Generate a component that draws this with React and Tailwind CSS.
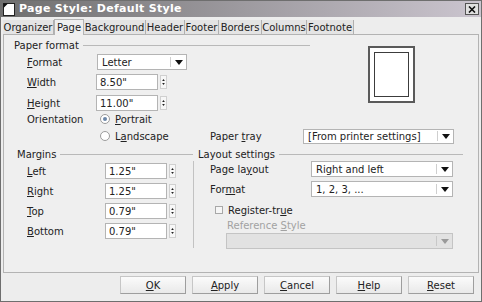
import React from "react";

const tabs = [
  { label: "Organizer", w: "w-[51px]" },
  { label: "Page", w: "w-[30px]", active: true },
  { label: "Background", w: "w-[62px]" },
  { label: "Header", w: "w-[39px]" },
  { label: "Footer", w: "w-[34px]" },
  { label: "Borders", w: "w-[43px]" },
  { label: "Columns", w: "w-[45px]" },
  { label: "Footnote", w: "w-[47px]" },
];

// label with one underlined mnemonic letter
function Mn({ text, at }) {
  return (
    <span className="whitespace-nowrap">
      {text.slice(0, at)}
      <u className="underline-offset-[1px]">{text[at]}</u>
      {text.slice(at + 1)}
    </span>
  );
}

function Arrow({ gray }) {
  return (
    <svg width="8" height="5" viewBox="0 0 8 5">
      <path d="M0 0 H8 L4 5 Z" fill={gray ? "#9a9a9a" : "#111"} />
    </svg>
  );
}

function Select({ value, w, h = "h-[16px]", disabled }) {
  return (
    <div
      className={`${w} ${h} flex border ${
        disabled ? "border-[#c4c4c4] bg-[#e2e2e2]" : "border-[#b4b4b4] bg-white"
      }`}
    >
      <div className="flex-1 flex items-center pl-[4px] whitespace-nowrap">{value}</div>
      <div className="w-[16px] flex items-center justify-center">
        <div className={`h-[10px] border-l ${disabled ? "border-[#c8c8c8]" : "border-[#cfcfcf]"}`} />
        <div className="flex-1 flex justify-center">
          <Arrow gray={disabled} />
        </div>
      </div>
    </div>
  );
}

function Spin({ value, w = "w-[62px]" }) {
  return (
    <div className="flex items-center">
      <div className={`${w} h-[16px] border border-[#b4b4b4] bg-white flex items-center pl-[3px]`}>
        {value}
      </div>
      <div className="ml-[2px] w-[7px] h-[14px] border border-[#d0d0d0] flex flex-col items-center justify-center gap-[2px] bg-[#f7f7f7]">
        <svg width="3" height="2" viewBox="0 0 4 3">
          <path d="M0 3 L2 0 L4 3 Z" fill="#222" />
        </svg>
        <svg width="3" height="2" viewBox="0 0 4 3">
          <path d="M0 0 H4 L2 3 Z" fill="#222" />
        </svg>
      </div>
    </div>
  );
}

function Radio({ checked }) {
  return (
    <div className="w-[10px] h-[10px] rounded-full border border-[#9c9c9c] bg-white flex items-center justify-center">
      {checked && <div className="w-[4px] h-[4px] rounded-full bg-[#6b86a8]" />}
    </div>
  );
}

function Header({ title, pl, lineEnd }) {
  return (
    <div className={`h-[14px] flex items-center ${pl}`}>
      <span className="whitespace-nowrap">{title}</span>
      <div className={`flex-1 ml-[4px] border-t border-[#b9b9b9] ${lineEnd}`} />
    </div>
  );
}

function Button({ children }) {
  return (
    <div className="w-[66px] h-[18px] flex items-center justify-center border border-[#c6c6c6] border-r-[#9e9e9e] border-b-[#9e9e9e] bg-gradient-to-b from-[#fbfbfb] to-[#e9e9e9]">
      {children}
    </div>
  );
}

export default function App() {
  return (
    <div className="w-[482px] h-[302px] overflow-hidden bg-[#ededed] border border-[#6e6e6e] flex flex-col font-['DejaVu_Sans',sans-serif] text-[10px] text-[#222]">
      {/* title bar */}
      <div className="h-[16px] flex items-center bg-gradient-to-r from-[#6f6f6f] via-[#9d9a9f] to-[#cbc5cf]">
        <svg width="12" height="13" viewBox="0 0 12 13" className="ml-[2px]">
          <rect x="0.5" y="0.5" width="11" height="12" fill="#fff" stroke="#222" />
          <path d="M0.5 0.5 H5 L0.5 5 Z" fill="#111" />
        </svg>
        <span className="ml-[4px] text-white font-bold text-[11px] tracking-[0.3px] whitespace-nowrap">
          Page Style: Default Style
        </span>
        <div className="ml-auto mr-[2px] w-[14px] h-[12px] border border-[#555] bg-[#e0e0e0] flex items-center justify-center">
          <svg width="8" height="7" viewBox="0 0 8 7">
            <path d="M1 0.5 L7 6.5 M7 0.5 L1 6.5" stroke="#111" strokeWidth="1.6" />
          </svg>
        </div>
      </div>

      {/* tabs */}
      <div className="h-[16px] flex items-end pl-[2px] mt-[1px]">
        {tabs.map((t) =>
          t.active ? (
            <div
              key={t.label}
              className={`${t.w} h-[16px] -mb-[1px] bg-[#efefef] border border-[#b3b3b3] border-b-0 flex items-center justify-center relative z-10`}
            >
              {t.label}
            </div>
          ) : (
            <div
              key={t.label}
              className={`${t.w} h-[14px] bg-[#e4e4e4] border-r border-[#b0b0b0] flex items-center justify-center whitespace-nowrap`}
            >
              {t.label}
            </div>
          )
        )}
      </div>

      {/* page panel */}
      <div className="mx-[2px] h-[239px] border border-[#b3b3b3] bg-[#efefef] flex flex-col">
        {/* paper format */}
        <div className="flex">
          <div className="w-[306px] flex flex-col">
            <div className="mt-[3px]">
              <Header title="Paper format" pl="pl-[10px]" lineEnd="" />
            </div>
            <div className="mt-[2px] h-[16px] flex items-center">
              <div className="w-[93px] pl-[23px]">
                <Mn text="Format" at={0} />
              </div>
              <Select value="Letter" w="w-[90px]" />
            </div>
            <div className="mt-[4px] h-[16px] flex items-center">
              <div className="w-[92px] pl-[23px]">
                <Mn text="Width" at={0} />
              </div>
              <Spin value={'8.50"'} />
            </div>
            <div className="mt-[5px] h-[16px] flex items-center">
              <div className="w-[92px] pl-[23px]">
                <Mn text="Height" at={0} />
              </div>
              <Spin value={'11.00"'} />
            </div>
            <div className="h-[16px] flex items-center">
              <div className="w-[96px] pl-[23px]">Orientation</div>
              <Radio checked />
              <span className="ml-[5px]">
                <Mn text="Portrait" at={0} />
              </span>
            </div>
          </div>
          <div className="ml-[58px] pt-[11px]">
            <div className="w-[47px] h-[57px] border-2 border-[#5a5a5a] bg-white p-[4px]">
              <div className="w-full h-full border border-[#3c3c3c] bg-white" />
            </div>
          </div>
        </div>
        <div className="mt-[1px] h-[16px] flex items-center">
          <div className="w-[206px] pl-[96px] flex items-center">
            <Radio />
            <span className="ml-[5px]">
              <Mn text="Landscape" at={1} />
            </span>
          </div>
          <div className="w-[93px]">
            <Mn text="Paper tray" at={6} />
          </div>
          <Select value="[From printer settings]" w="w-[151px]" h="h-[15px]" />
        </div>

        {/* margins + layout settings */}
        <div className="mt-[3px] flex">
          <div className="w-[189px] flex flex-col">
            <Header title="Margins" pl="pl-[13px]" lineEnd="" />
            {[
              ["Left", 0, '1.25"', "mt-[2px]"],
              ["Right", 0, '1.25"', "mt-[4px]"],
              ["Top", 0, '0.79"', "mt-[4px]"],
              ["Bottom", 0, '0.79"', "mt-[4px]"],
            ].map(([l, at, v, mt]) => (
              <div key={l} className={`${mt} h-[16px] flex items-center`}>
                <div className="w-[101px] pl-[23px]">
                  <Mn text={l} at={at} />
                </div>
                <Spin value={v} />
              </div>
            ))}
          </div>
          <div className="w-[270px] flex flex-col">
            <Header title="Layout settings" pl="pl-[5px]" lineEnd="" />
            <div className="border-l border-[#c2c2c2] h-[87px] flex flex-col">
              <div className="h-[16px] flex items-center">
                <div className="w-[117px] pl-[16px]">
                  <Mn text="Page layout" at={7} />
                </div>
                <Select value="Right and left" w="w-[142px]" />
              </div>
              <div className="mt-[4px] h-[16px] flex items-center">
                <div className="w-[117px] pl-[16px]">
                  <Mn text="Format" at={3} />
                </div>
                <Select value="1, 2, 3, ..." w="w-[142px]" />
              </div>
              <div className="mt-[6px] h-[14px] flex items-center pl-[21px]">
                <div className="w-[8px] h-[8px] border border-[#a8a8a8] bg-[#f6f6f6]" />
                <span className="ml-[5px]">
                  <Mn text="Register-true" at={11} />
                </span>
              </div>
              <div className="mt-[2px] h-[12px] flex items-center pl-[33px] text-[#a2a2a2]">
                <Mn text="Reference Style" at={10} />
              </div>
              <div className="mt-[2px] ml-[32px]">
                <Select value="" w="w-[227px]" disabled />
              </div>
            </div>
          </div>
        </div>
      </div>

      {/* buttons */}
      <div className="mt-[3px] flex justify-end gap-[6px] pr-[7px]">
        <Button>
          <Mn text="OK" at={0} />
        </Button>
        <Button>
          <Mn text="Apply" at={0} />
        </Button>
        <Button>
          <Mn text="Cancel" at={0} />
        </Button>
        <Button>
          <Mn text="Help" at={0} />
        </Button>
        <Button>
          <Mn text="Reset" at={0} />
        </Button>
      </div>
    </div>
  );
}
